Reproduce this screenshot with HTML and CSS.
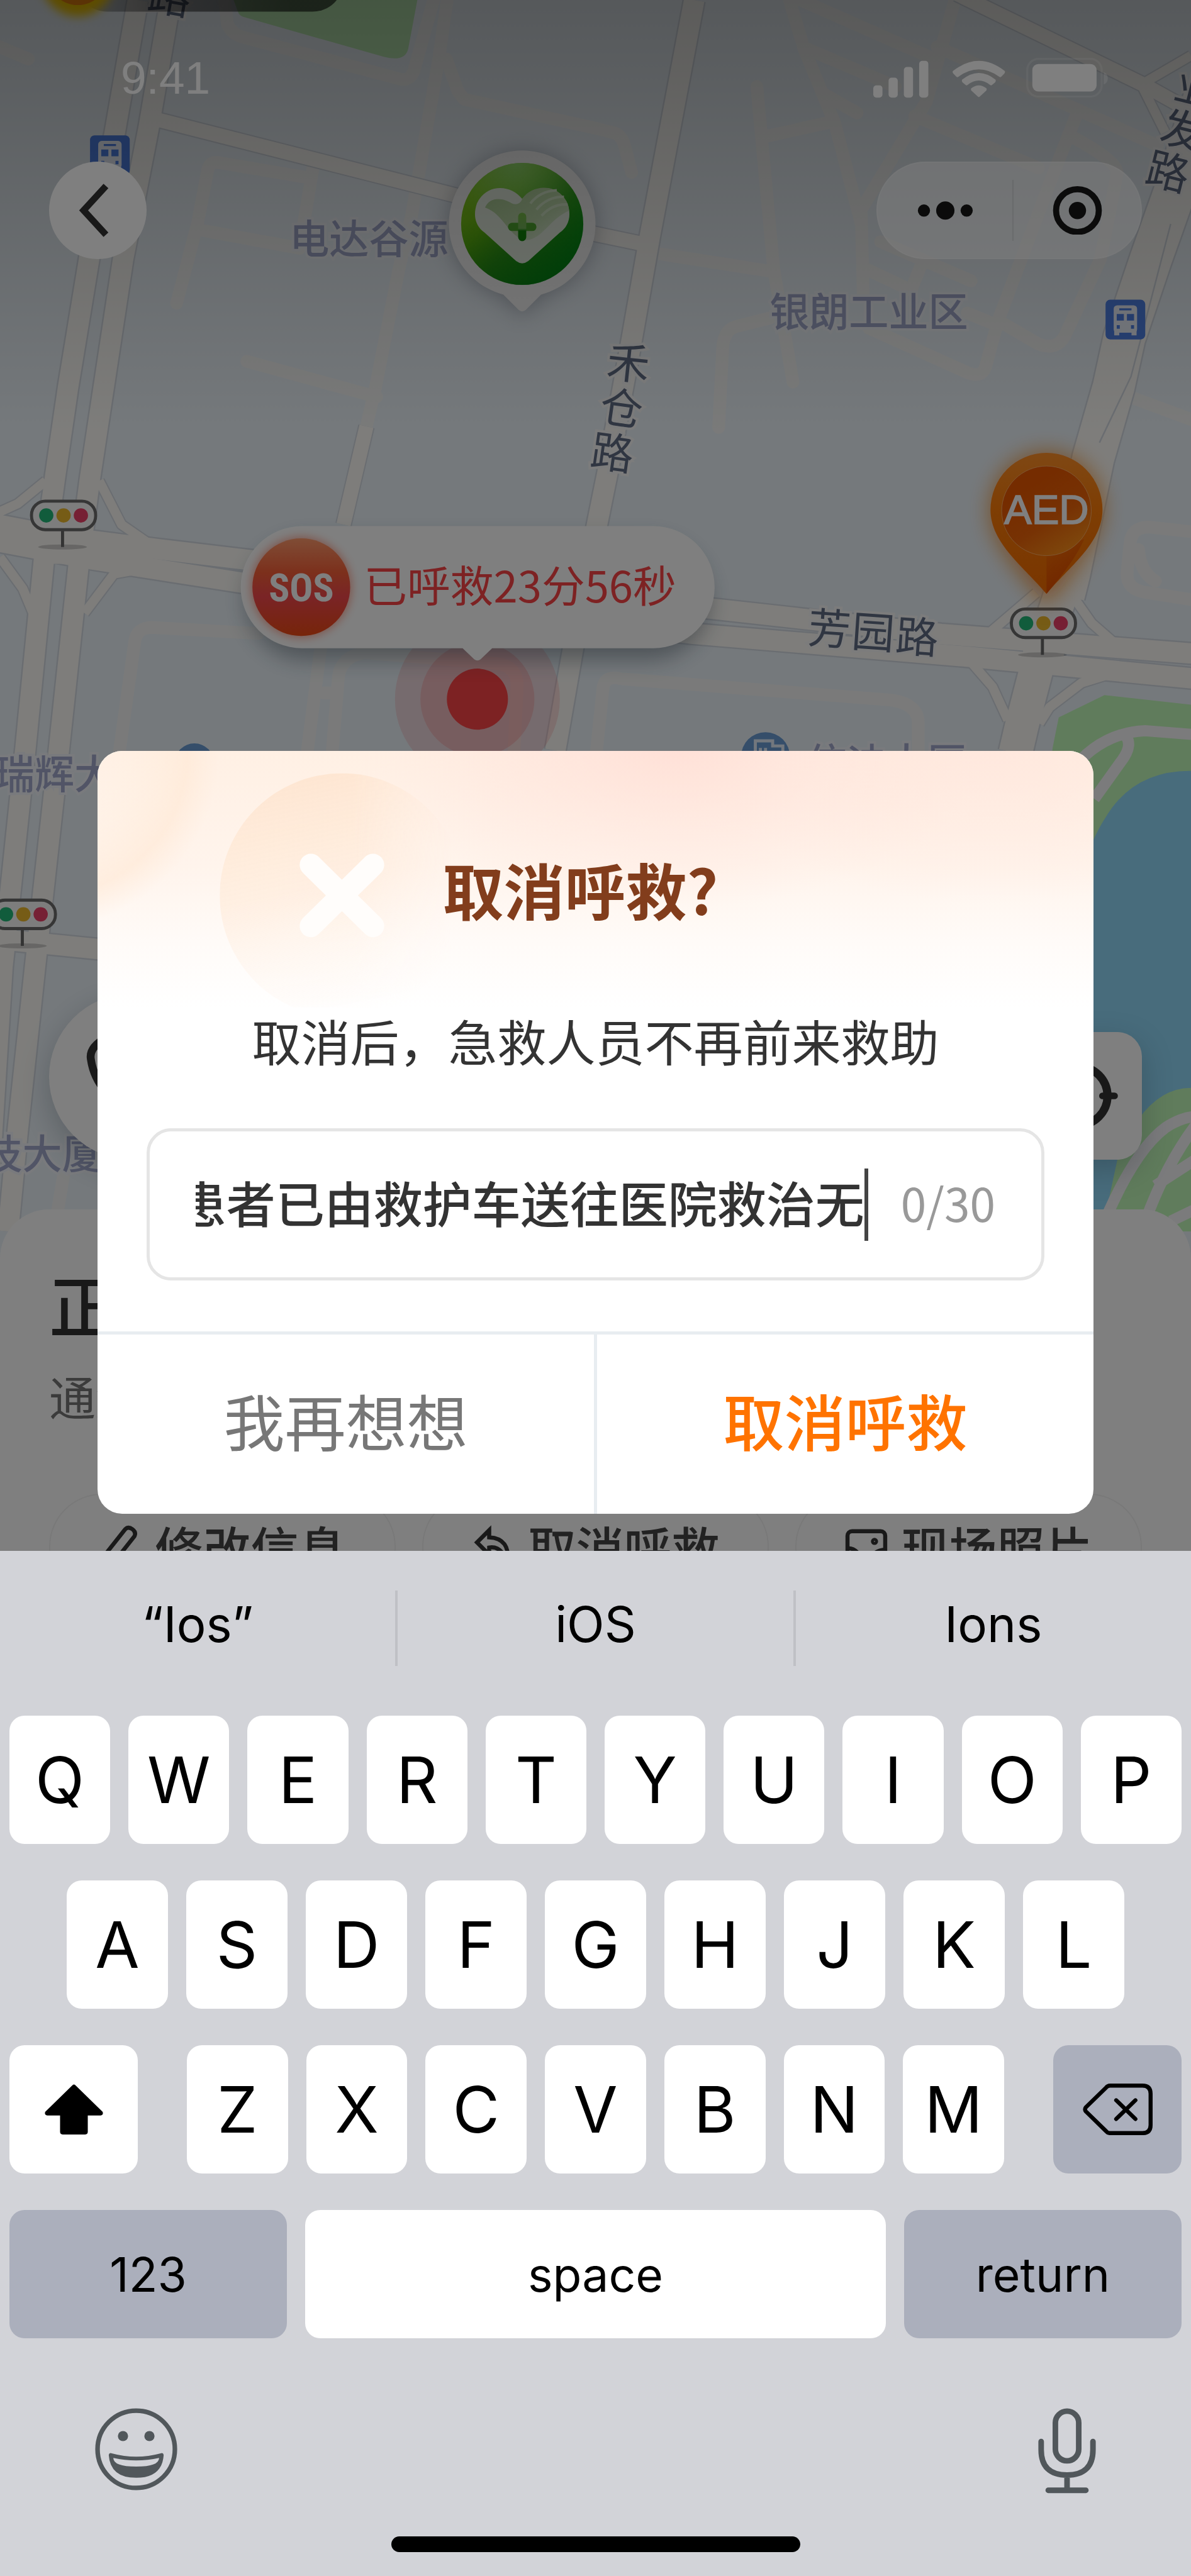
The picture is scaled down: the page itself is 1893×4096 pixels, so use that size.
FILE: index.html
```html
<!DOCTYPE html>
<html lang="zh-CN">
<head>
<meta charset="utf-8">
<meta name="viewport" content="width=device-width, initial-scale=1">
<title>取消呼救</title>
<link rel="stylesheet" href="styles.css">
</head>
<body>
<div class="phone">
  <main class="scene">
    <svg class="map" viewBox="0 0 2340 3048" preserveAspectRatio="xMidYMin slice" role="img" aria-label="地图">
      <defs>
        <g id="r-main" fill="none">
          <path d="M271 0L225 264L176 504L134 760L108 939L87 1094L50 1472L5 1900L-20 2300"/>
          <path d="M335 0L292 252L242 509L204 760L177 939L155 1106L116 1472L69 1900L34 2231L16 2420"/>
          <path d="M1364 0L1277 463L1240 674L1193 932L1173 1031L1126 1274L1091 1475"/>
          <path d="M-10 1030L120 1055L300 1078L485 1100L1405 1197L1849 1246L2350 1285"/>
          <path d="M-10 1063L180 1099L474 1145L1356 1245L1894 1290L2350 1334"/>
          <path d="M-10 1845L200 1866"/>
        </g>
        <g id="r-side" fill="none">
          <path d="M313 236L895 384L1170 460L1256 478"/>
          <path d="M1880 -12L2244 165L2350 224"/>
          <path d="M720 838L675 1031"/>
        </g>
        <g id="r-wide" fill="none">
          <path d="M2370 180L2311 368L2261 509L2209 664L2188 760L2148 900L2100 1130L2090 1170"/>
        </g>
        <g id="r-wide2" fill="none">
          <path d="M2090 1150L2038 1308L2008 1424L1995 1480"/>
        </g>
        <g id="r-slip" fill="none">
          <path d="M-5 1008L35 990L90 945M195 945L239 1031L298 1072M0 1095L45 1157L65 1205M166 1205L224 1128L280 1118"/>
          <path d="M2036 1165L1946 1242M2110 1175L2145 1225L2192 1266M1905 1298L1950 1350L1980 1415M2042 1422L2062 1390L2125 1342L2170 1328"/>
          <path d="M2244 165L2340 109M2244 170L2289 260"/>
        </g>
        <linearGradient id="shade" x2="0" y2="1">
          <stop offset="0" stop-color="#000" stop-opacity=".27"/>
          <stop offset="1" stop-color="#000" stop-opacity="0"/>
        </linearGradient>
        <linearGradient id="pill" x2="1">
          <stop offset="0" stop-color="#000" stop-opacity=".2"/>
          <stop offset=".35" stop-color="#000" stop-opacity=".45"/>
          <stop offset=".8" stop-color="#000" stop-opacity=".6"/>
        </linearGradient>
        <linearGradient id="green" x1=".15" y1=".2" x2=".85" y2=".8">
          <stop offset="0" stop-color="#7ec81a"/>
          <stop offset=".25" stop-color="#6cc012"/>
          <stop offset=".55" stop-color="#3ca41c"/>
          <stop offset="1" stop-color="#0a9a1c"/>
        </linearGradient>
        <radialGradient id="green-top" cx=".45" cy="0" r=".55">
          <stop offset="0" stop-color="#a6eca0" stop-opacity=".65"/>
          <stop offset="1" stop-color="#a6eca0" stop-opacity="0"/>
        </radialGradient>
        <linearGradient id="green-bottom" x1=".5" y1=".4" x2=".6" y2="1">
          <stop offset="0" stop-color="#007a00" stop-opacity="0"/>
          <stop offset="1" stop-color="#007a10" stop-opacity=".6"/>
        </linearGradient>
        <linearGradient id="palm" x1="0" y1="0" x2="1" y2="1">
          <stop offset="0" stop-color="#a8cc90"/>
          <stop offset=".6" stop-color="#c0dcae"/>
          <stop offset="1" stop-color="#e6f4e4"/>
        </linearGradient>
        <linearGradient id="cross" x2="0" y2="1">
          <stop offset="0" stop-color="#7ec84c"/>
          <stop offset=".55" stop-color="#7cc060"/>
          <stop offset=".64" stop-color="#108c08"/>
          <stop offset="1" stop-color="#108c08"/>
        </linearGradient>
        <linearGradient id="sos" x2="0" y2="1">
          <stop offset="0" stop-color="#ff9a6c"/>
          <stop offset=".35" stop-color="#f86038"/>
          <stop offset=".6" stop-color="#f4484c"/>
          <stop offset="1" stop-color="#ee4a14"/>
        </linearGradient>
        <linearGradient id="aed" x2="0" y2="1">
          <stop offset="0" stop-color="#ff9028"/>
          <stop offset=".4" stop-color="#fc7c08"/>
          <stop offset="1" stop-color="#f46c00"/>
        </linearGradient>
        <linearGradient id="aed-in" x1=".3" y1=".2" x2=".8" y2="1">
          <stop offset="0" stop-color="#ea5800"/>
          <stop offset=".5" stop-color="#ee6408"/>
          <stop offset="1" stop-color="#ff961c"/>
        </linearGradient>
        <linearGradient id="aed-side" x2=".5" y2="1">
          <stop offset="0" stop-color="#e04800" stop-opacity="0"/>
          <stop offset="1" stop-color="#e04800"/>
        </linearGradient>
        <filter id="soft" x="-50%" y="-50%" width="200%" height="200%"><feGaussianBlur stdDeviation="22"/></filter>
        <filter id="soft-s" x="-50%" y="-50%" width="200%" height="200%"><feGaussianBlur stdDeviation="9"/></filter>
        <g id="bus">
          <rect width="78" height="78" rx="9" fill="#4f82e8"/>
          <rect x="16" y="11" width="46" height="54" rx="7" fill="#eef4ff"/>
          <path d="M17 60h10v10H17zM51 60h10v10H51z" fill="#eef4ff"/>
          <path d="M27 17h24v4H27zM22 28h14v13H22zM42 28h14v13H42zM22 50h6v7h-6zM50 50h6v7h-6z" fill="#4f82e8"/>
        </g>
        <g id="signal">
          <ellipse cx="-2" cy="62" rx="48" ry="5" fill="#000" opacity=".18"/>
          <path d="M-2 28V62" stroke="#666" stroke-width="6"/>
          <rect x="-63" y="-28" width="126" height="56" rx="27" fill="#fafafa" stroke="#6c6c6c" stroke-width="6"/>
          <circle cx="-34" r="14" fill="#22b878"/><circle r="14" fill="#ecb82c"/><circle cx="34" r="14" fill="#ec4068"/>
        </g>
      </defs>

      <rect width="2340" height="3048" fill="#ebf3f9"/>
      <path d="M459 0L468 24Q470 30 478 33L755 112Q796 122 802 96L820 0Z" fill="#bcecb4"/>
      <path d="M2055 1600L2068 1470L2080 1410L2170 1366L2340 1385V2420H2055Z" fill="#c0f8b8"/>
      <path d="M2100 2420V1760Q2150 1640 2170 1610Q2225 1514 2340 1515V2138Q2250 2138 2195 2280L2165 2420Z" fill="#90d8f8"/>

      <g class="lane">
        <path d="M440 -10L447 48Q455 66 477 73L785 155Q805 160 813 140L852 0"/>
        <path d="M880 -10L862 116L820 359L809 422L783 533L738 760L720 838"/>
        <path d="M630 1274L604 1475M877 116L900 180L912 195L1170 252L1210 262Q1224 270 1228 290L1241 339"/>
        <path d="M-10 88L56 116M347 596L388 440L408 335Q412 315 432 320L604 349M615 330L590 480M388 451L589 488M485 710L740 780"/>
        <path d="M235 1475L265 1260Q269 1234 298 1233L507 1245M653 1475L665 1330Q670 1290 716 1283L977 1304Q1018 1310 1016 1350L1010 1475"/>
        <path d="M636 1362H660M1573 0L1826 112M1588 97L1759 170M1876 0L1820 200L1692 412L1696 582M1548 -10L1580 97L1640 242L1692 440"/>
        <path d="M1487 170L1520 528L1558 751M1509 267L1632 240M1617 184L1684 222M1841 92L2274 286M1797 228L2040 330"/>
        <path d="M2114 228L2070 340L1961 630L1936 722Q1928 744 1900 732L1707 645M1961 630L2040 676Q2076 690 2092 660L2162 509L2195 340Q2194 316 2110 271"/>
        <path d="M1730 475L1908 552M1700 528L1789 570M1810 520L1790 570M1297 499L1513 533M1513 625L1445 642Q1424 648 1420 680L1412 840"/>
        <path d="M1900 615L1961 640M1172 1475L1185 1350Q1190 1326 1220 1334L1752 1376Q1804 1384 1804 1420V1475"/>
        <path d="M2350 1046L2260 1036Q2222 1034 2220 1070L2214 1128Q2214 1158 2250 1164L2350 1180M2237 1080Q2240 1125 2270 1142M2220 780L2350 828M125 2310L110 2400"/>
      </g>
      <g class="park-path">
        <path d="M2100 1520Q2160 1440 2250 1436L2350 1444M2205 1440Q2232 1460 2200 1500L2150 1570"/>
        <path d="M2170 2400Q2230 2260 2290 2216Q2320 2196 2350 2194M2250 2400Q2290 2290 2350 2210M2270 2330L2350 2278M2300 2400L2350 2376"/>
      </g>

      <g class="casing">
        <use href="#r-slip" stroke-width="23"/><use href="#r-side" stroke-width="33"/><use href="#r-main" stroke-width="46"/><use href="#r-wide" stroke-width="88"/><use href="#r-wide2" stroke-width="72"/>
      </g>
      <g class="road">
        <use href="#r-slip" stroke-width="18"/><use href="#r-side" stroke-width="28"/><use href="#r-main" stroke-width="40"/><use href="#r-wide" stroke-width="82"/><use href="#r-wide2" stroke-width="66"/>
        <path d="M80 1078H180" stroke-width="60"/>
        <path d="M2010 1276H2090" stroke-width="60"/>
      </g>
      <path d="M2300 440L2222 740L2160 870" fill="none" stroke="#d4dae2" stroke-width="3"/>

      <g class="place">
        <text x="569" y="498">电达谷源</text>
        <text x="1512" y="642">银朗工业区</text>
        <text x="-10" y="1550">瑞辉大</text>
        <text x="-34" y="2297">技大厦</text>
        <text x="1586" y="1528">信迪大厦</text>
      </g>
      <g class="street">
        <text transform="translate(335 -12) rotate(10)">路</text>
        <text transform="translate(1235 708) rotate(6)">禾</text>
        <text transform="translate(1222 797) rotate(8)">仓</text>
        <text transform="translate(1204 884) rotate(8)">路</text>
        <text transform="translate(1630 1230) rotate(4)">芳</text>
        <text transform="translate(1716 1237) rotate(4)">园</text>
        <text transform="translate(1802 1246) rotate(4)">路</text>
        <text transform="translate(2352 168) rotate(14)">业</text>
        <text transform="translate(2325 250) rotate(14)">发</text>
        <text transform="translate(2296 332) rotate(14)">路</text>
      </g>
      <use href="#bus" x="177" y="266"/>
      <use href="#bus" x="2172" y="589"/>
      <circle cx="382" cy="1500" r="39" fill="#6a9cd4"/>
      <circle cx="1504" cy="1487" r="48" fill="#6a9cd4"/>
      <path d="M1484 1500V1456H1518V1466H1538V1500M1494 1470V1500M1504 1470V1500" fill="none" stroke="#e4eefa" stroke-width="6"/>
      <use href="#signal" x="125" y="1013"/>
      <use href="#signal" x="2050" y="1225"/>
      <use href="#signal" x="46" y="1797"/>

      <rect x="150" y="-100" width="525" height="123" rx="61" fill="url(#pill)"/>
      <circle cx="153" cy="-40" r="72" fill="#ffd000" filter="url(#soft-s)"/>
      <circle cx="153" cy="-50" r="60" fill="#f88c10"/>

      <!-- volunteer pin -->
      <path d="M1026 620L985 580A144 144 0 1 1 1067 580Z" fill="#303848" opacity=".35" filter="url(#soft)"/>
      <path d="M1019 609L989 579A144 144 0 1 1 1063 579L1033 609Q1026 615 1019 609Z" fill="#f8f8f8"/>
      <circle cx="1026" cy="440" r="120" fill="url(#green)"/>
      <circle cx="1026" cy="440" r="120" fill="url(#green-top)"/>
      <circle cx="1026" cy="440" r="120" fill="url(#green-bottom)"/>
      <path d="M1026 391C1004 362 955 360 937 400C928 426 936 446 952 457L1014 513Q1026 522 1038 513L1100 457C1116 446 1124 426 1115 400C1097 360 1048 362 1026 391Z" fill="#e6f0e2"/>
      <path d="M953 408C962 386 988 388 1006 400C1022 406 1026 391 1026 391C1042 366 1080 362 1100 380Q1117 394 1118 414C1080 430 1066 470 1034 472C1000 468 990 420 953 408Z" fill="url(#palm)"/>
      <path d="M1042 400Q1060 376 1094 374M1054 412Q1076 386 1108 387M1064 424Q1086 400 1115 402" fill="none" stroke="#d6eaca" stroke-width="5"/>
      <rect x="998" y="438" width="56" height="16" rx="8" fill="#50ac30"/>
      <rect x="1018" y="418" width="16" height="56" rx="8" fill="url(#cross)"/>

      <!-- AED pin -->
      <path d="M2056 1190C2000 1120 1940 1060 1946 1000A110 112 0 0 1 2166 1000C2166 1060 2110 1120 2056 1190Z" fill="#f47c10" opacity=".7" filter="url(#soft)"/>
      <path d="M2056 1167C2014 1116 1946 1068 1946 1002A110 112 0 0 1 2166 1002C2166 1068 2098 1116 2056 1167Z" fill="url(#aed)"/>
      <path d="M2056 1167V1080L2130 1060Q2110 1105 2056 1167Z" fill="url(#aed-side)"/>
      <circle cx="2056" cy="1004" r="88" fill="url(#aed-in)" stroke="#ffb878" stroke-width="1"/>
      <text class="aed-text" x="2056" y="1029">AED</text>
      <rect width="2340" height="848" fill="url(#shade)"/>

      <!-- caller pin -->
      <circle cx="938" cy="1374" r="162" fill="#fa4446" opacity=".16"/>
      <circle cx="938" cy="1374" r="112" fill="#fa4446" opacity=".2"/>
      <circle cx="938" cy="1374" r="60" fill="#fa4446"/>
      <rect x="483" y="1060" width="911" height="236" rx="118" fill="#203040" opacity=".4" filter="url(#soft)"/>
      <path d="M593 1034H1284A120 120 0 0 1 1284 1274H967L944 1296Q938 1300 932 1296L909 1274H593A120 120 0 0 1 593 1034Z" fill="#fff"/>
      <circle cx="592" cy="1154" r="98" fill="#fa6040" opacity=".6" filter="url(#soft-s)"/>
      <circle cx="592" cy="1154" r="96" fill="url(#sos)"/>
      <text class="sos-text" x="592" y="1182">SOS</text>
      <text class="sos-time" x="715" y="1184">已呼救23分56秒</text>
    </svg>

    <div class="ui">
      <div class="status">
        <span class="status__time">9:41</span>
        <svg class="status__icons" viewBox="0 0 464 78" aria-hidden="true">
          <g fill="#fff">
            <rect x="0" y="54" width="18" height="24" rx="6"/><rect x="30" y="39" width="18" height="39" rx="6"/><rect x="60" y="18" width="18" height="60" rx="6"/><rect x="90" y="6" width="18" height="72" rx="6"/>
            <path d="M156 26Q207-14 258 26Q259 29 257 31L251 37Q249 39 247 37Q207 8 167 37Q165 39 163 37L157 31Q155 29 156 26Z"/>
            <path d="M174 43Q207 16 240 43Q241 46 239 48L233 53Q231 55 229 53Q207 36 185 53Q183 55 181 53L175 48Q173 46 174 43Z"/>
            <path d="M192 60Q207 48 222 60Q223 62 222 64L209 76Q207 78 205 76L192 64Q191 62 192 60Z"/>
            <rect x="312" y="12" width="126" height="54" rx="12"/>
            <path d="M452 28Q460 31 460 40T452 52Z" opacity=".35"/>
          </g>
          <rect x="302" y="2" width="146" height="74" rx="22" fill="none" stroke="#fff" stroke-width="4" opacity=".2"/>
        </svg>
      </div>
      <div class="nav">
        <button class="nav__back" type="button" aria-label="返回">
          <svg viewBox="0 0 192 192" aria-hidden="true"><path d="M112 48L68 96L112 144" fill="none" stroke="#333" stroke-width="13"/></svg>
        </button>
        <div class="capsule">
          <button class="capsule__more" type="button" aria-label="更多"><svg viewBox="0 0 120 96" aria-hidden="true"><circle cx="18" cy="48" r="12"/><circle cx="60" cy="48" r="18"/><circle cx="102" cy="48" r="12"/></svg></button>
          <button class="capsule__close" type="button" aria-label="关闭"><svg viewBox="0 0 120 96" aria-hidden="true"><circle cx="60" cy="48" r="42" fill="none" stroke="#161616" stroke-width="12"/><circle cx="60" cy="48" r="17"/></svg></button>
        </div>
      </div>
      <div class="tools">
        <button class="tools__phone" type="button" aria-label="电话">
          <svg viewBox="0 0 96 96" aria-hidden="true"><path d="M22 8Q4 18 6 30Q12 72 66 90Q78 92 88 74Q90 70 86 66L68 56Q64 54 60 58L54 64Q38 54 32 42L38 36Q42 32 40 28L30 10Q27 6 22 8Z" fill="none" stroke="#333" stroke-width="8"/></svg>
        </button>
        <button class="tools__locate" type="button" aria-label="定位">
          <svg viewBox="0 0 160 160" aria-hidden="true"><g fill="none" stroke="#333" stroke-width="16" stroke-linecap="round"><circle cx="80" cy="80" r="58"/><path d="M80 8V32M80 128V152M8 80H32M128 80H152" stroke-width="13"/></g></svg>
        </button>
      </div>
      <section class="sheet">
        <h2>正在</h2>
        <p>通知中</p>
        <div class="sheet__actions">
          <button type="button"><svg viewBox="0 0 84 84" aria-hidden="true"><path d="M14 56L52 8Q58 2 66 8T70 22L32 70L10 76Z"/></svg>修改信息</button>
          <button type="button"><svg viewBox="0 0 84 84" aria-hidden="true"><path d="M34 10L10 34L34 58V44Q58 40 70 74Q76 26 34 24Z"/></svg>取消呼救</button>
          <button type="button"><svg viewBox="0 0 84 84" aria-hidden="true"><rect x="5" y="12" width="74" height="62" rx="9"/><path d="M6 46Q20 44 34 66M48 70Q56 50 78 48"/><circle cx="58" cy="32" r="3"/></svg>现场照片</button>
        </div>
      </section>
    </div>

    <div class="mask"></div>

    <div class="stage">
      <form class="dialog" role="dialog" aria-labelledby="dialog-title">
        <svg class="dialog__art" viewBox="0 0 1956 504" aria-hidden="true">
          <defs>
            <linearGradient id="base" x2="0" y2="1">
              <stop offset="0" stop-color="#fff0e4"/><stop offset=".45" stop-color="#fff4ec"/><stop offset=".75" stop-color="#fffbf8"/><stop offset="1" stop-color="#fff"/>
            </linearGradient>
            <radialGradient id="pink" gradientUnits="userSpaceOnUse" cx="0" cy="0" r="1" gradientTransform="translate(1130 -20) scale(620 330)">
              <stop offset="0" stop-color="#ffdfd6" stop-opacity=".95"/><stop offset="1" stop-color="#ffe4dc" stop-opacity="0"/>
            </radialGradient>
            <radialGradient id="pink2" gradientUnits="userSpaceOnUse" cx="0" cy="0" r="1" gradientTransform="translate(1760 0) scale(560 300)">
              <stop offset="0" stop-color="#ffe6dc" stop-opacity=".8"/><stop offset="1" stop-color="#ffe6dc" stop-opacity="0"/>
            </radialGradient>
            <radialGradient id="arc" gradientUnits="userSpaceOnUse" cx="-110" cy="0" r="350">
              <stop offset=".3" stop-color="#fff4e6" stop-opacity="0"/><stop offset=".82" stop-color="#ffe8d4" stop-opacity=".6"/><stop offset="1" stop-color="#ffead8" stop-opacity="0"/>
            </radialGradient>
            <linearGradient id="disc" x1=".4" x2=".6" y2="1">
              <stop offset="0" stop-color="#fee6d2"/><stop offset=".45" stop-color="#ffeee0" stop-opacity=".9"/><stop offset=".9" stop-color="#fffaf6" stop-opacity=".4"/><stop offset="1" stop-color="#fff" stop-opacity="0"/>
            </linearGradient>
            <linearGradient id="disc-fade" x2="1"><stop offset=".55" stop-color="#fff"/><stop offset=".95" stop-color="#000"/></linearGradient>
            <mask id="disc-mask"><rect x="240" y="44" width="480" height="460" fill="url(#disc-fade)"/></mask>
          </defs>
          <rect width="1956" height="504" fill="url(#base)"/>
          <rect width="1956" height="504" fill="url(#pink)"/>
          <rect width="1956" height="504" fill="url(#pink2)"/>
          <rect width="400" height="400" fill="url(#arc)"/>
          <circle cx="480" cy="284" r="240" fill="url(#disc)" mask="url(#disc-mask)"/>
          <path d="M419 224L541 344M541 224L419 344" stroke="#fffdfb" stroke-width="44" stroke-linecap="round"/>
        </svg>
        <div class="dialog__body">
          <h1 id="dialog-title">取消呼救?</h1>
          <p>取消后，急救人员不再前来救助</p>
          <div class="field">
            <input type="text" value="患者已由救护车送往医院救治无" aria-label="取消原因">
            <span class="field__caret"></span>
            <span class="field__count">0/30</span>
          </div>
        </div>
        <div class="dialog__actions">
          <button type="button">我再想想</button>
          <button class="is-primary" type="submit">取消呼救</button>
        </div>
      </form>
    </div>
  </main>

  <section class="keyboard" aria-label="键盘">
    <div class="suggest">
      <button type="button">“Ios”</button><button type="button">iOS</button><button type="button">Ions</button>
    </div>
    <div class="rows">
      <div class="row"><button>Q</button><button>W</button><button>E</button><button>R</button><button>T</button><button>Y</button><button>U</button><button>I</button><button>O</button><button>P</button></div>
      <div class="row row--inset"><button>A</button><button>S</button><button>D</button><button>F</button><button>G</button><button>H</button><button>J</button><button>K</button><button>L</button></div>
      <div class="row row--wide">
        <button class="key-side" aria-label="shift"><svg viewBox="0 0 114 98" aria-hidden="true"><path d="M54 2Q57-1 60 2L113 54Q115 60 109 61H84V93Q84 98 79 98H35Q30 98 30 93V61H5Q-1 60 1 54Z"/></svg></button>
        <div class="row__letters"><button>Z</button><button>X</button><button>C</button><button>V</button><button>B</button><button>N</button><button>M</button></div>
        <button class="key-side is-grey" aria-label="delete"><svg viewBox="0 0 138 102" aria-hidden="true"><g fill="none" stroke="#000" stroke-width="8" stroke-linejoin="round" stroke-linecap="round"><path d="M54 4H118Q134 4 134 20V82Q134 98 118 98H54Q49 98 46 94L6 55Q3 51 6 47L46 8Q49 4 54 4Z"/><path d="M66 33L104 70M104 33L66 70"/></g></svg></button>
      </div>
      <div class="row row--text"><button class="key-fn is-grey">123</button><button>space</button><button class="key-fn is-grey">return</button></div>
    </div>
    <div class="tray">
      <button type="button" aria-label="表情"><svg class="tray__emoji" viewBox="0 0 162 162" aria-hidden="true"><circle cx="81" cy="81" r="76" fill="none" stroke="#51575b" stroke-width="9"/><ellipse cx="55" cy="55" rx="10" ry="10" fill="#51575b"/><ellipse cx="107" cy="55" rx="10" ry="10" fill="#51575b"/><path d="M27 92Q28 87 33 89Q81 102 129 89Q134 87 135 92Q132 137 81 137T27 92Z" fill="#51575b"/><path d="M36 98Q81 108 126 98Q126 115 81 115T36 98Z" fill="#d2d3d8"/></svg></button>
      <button type="button" aria-label="语音"><svg class="tray__mic" viewBox="0 0 114 168" aria-hidden="true"><g fill="none" stroke="#51575b" stroke-width="11" stroke-linecap="round"><rect x="34" y="6" width="46" height="98" rx="23"/><path d="M6 66V82Q6 132 57 132T108 82V66M57 132V158M20 162H94"/></g></svg></button>
    </div>
    <div class="home"></div>
  </section>
</div>
</body>
</html>
```
FILE: styles.css
```css
* { box-sizing: border-box; }

body {
  margin: 0;
  background: #d2d3d8;
  font-family: "Noto Sans CJK SC", "Noto Sans", sans-serif;
}

h1, h2, p { margin: 0; }

button {
  padding: 0;
  border: 0;
  background: none;
  color: inherit;
  font: inherit;
}

svg { display: block; }

.phone {
  display: flex;
  flex-direction: column;
  min-height: 100vh;
}

/* Map scene with its layers */
.scene {
  position: relative;
  flex: 1;
  overflow: hidden;
}

.map, .ui, .mask {
  position: absolute;
  inset: 0;
  width: 100%;
  height: 100%;
}

.mask { background: rgba(0, 0, 0, .5); }

.lane path { fill: none; stroke: #f4f5f4; stroke-width: 25px; stroke-linecap: round; stroke-linejoin: round; }
.park-path path { fill: none; stroke: #f6f6f9; stroke-width: 22px; }
.casing { stroke: #d4dae2; stroke-linejoin: round; }
.road { stroke: #fcfbf7; stroke-linejoin: round; }

.place text {
  font-size: 78px;
  font-weight: 500;
  fill: #a2a9cc;
  stroke: #f2f5fa;
  stroke-width: 10px;
  paint-order: stroke;
}

.street text {
  font-size: 84px;
  font-weight: 400;
  text-anchor: middle;
  dominant-baseline: central;
  fill: #606c84;
  stroke: #f8f8f8;
  stroke-width: 10px;
  paint-order: stroke;
}

.aed-text {
  font: 500 81px "Liberation Sans", sans-serif;
  text-anchor: middle;
  fill: #fff;
  stroke: #fff;
  stroke-width: 2px;
}

.sos-text {
  font: 700 76px "Liberation Sans Narrow", "Roboto Condensed", "Liberation Sans", sans-serif;
  text-anchor: middle;
  fill: #fff;
}

.sos-time { font-size: 85px; fill: #fa4446; }

.ui {
  display: flex;
  flex-direction: column;
  padding-top: 92px;
}

.status {
  display: flex;
  justify-content: space-between;
  align-items: center;
  height: 64px;
  padding: 0 129px 0 192px;
}

.status__time {
  font: 400 73px/64px "Liberation Sans", sans-serif;
  color: #fff;
}

.status__icons { width: 376px; }

.nav {
  display: flex;
  justify-content: space-between;
  margin-top: 101px;
  padding: 0 78px;
}

.nav__back {
  width: 155px;
  height: 155px;
  border-radius: 50%;
  background: #fff;
}

.capsule {
  display: flex;
  align-items: center;
  width: 422px;
  height: 155px;
  border: 2px solid rgba(255, 255, 255, .2);
  border-radius: 78px;
  background: rgba(255, 255, 255, .5);
}

.capsule button {
  display: flex;
  justify-content: center;
  align-items: center;
  height: 97px;
}

.capsule__more { flex: 1; }
.capsule .capsule__close { width: 204px; border-left: 2px solid rgba(0, 0, 0, .08); }
.capsule svg { width: 97px; fill: #161616; }

.tools {
  display: flex;
  justify-content: space-between;
  align-items: flex-end;
  margin-top: 1168px;
  padding: 0 78px;
}

.tools button {
  display: flex;
  justify-content: center;
  align-items: center;
  background: #fff;
  box-shadow: 0 16px 48px rgba(32, 48, 64, .25);
}

.tools__phone { width: 264px; height: 264px; border-radius: 50%; }
.tools__phone svg { width: 150px; }
.tools__locate { width: 204px; height: 203px; border-radius: 39px; }
.tools__locate svg { width: 129px; }

.sheet {
  flex-shrink: 0;
  margin-top: 79px;
  padding: 74px 78px 0;
  border-radius: 78px 78px 0 0;
  background: #fff;
}

.sheet h2 {
  font-size: 107px;
  font-weight: 500;
  line-height: 150px;
  color: #333;
}

.sheet p {
  margin-top: 20px;
  font-size: 74px;
  line-height: 104px;
  color: #777;
}

.sheet__actions {
  display: flex;
  gap: 42px;
  margin-top: 104px;
}

.sheet__actions button {
  display: flex;
  justify-content: center;
  align-items: center;
  gap: 22px;
  flex: 1;
  height: 168px;
  border: 2px solid #f2f2f2;
  border-radius: 84px;
  font-size: 76px;
  font-weight: 500;
  color: #444;
}

.sheet__actions svg {
  width: 68px;
  fill: none;
  stroke: #333;
  stroke-width: 8px;
}

/* Dialog */
.stage {
  position: relative;
  padding: 1194px 155px 59px;
}

.dialog {
  position: relative;
  overflow: hidden;
  border-radius: 39px;
  background: #fff;
}

.dialog__art {
  position: absolute;
  top: 0;
  left: 0;
  width: 100%;
}

.dialog__body {
  position: relative;
  padding: 144px 78px 81px;
  text-align: center;
}

.dialog h1 {
  padding-right: 48px;
  font-size: 97px;
  font-weight: 700;
  line-height: 150px;
  color: #823d1c;
}

.dialog p {
  margin-top: 110px;
  font-size: 78px;
  line-height: 112px;
  color: #333;
}

.field {
  display: flex;
  align-items: center;
  height: 242px;
  margin-top: 84px;
  padding: 0 73px;
  border: 5px solid #e5e5e5;
  border-radius: 39px;
}

.field input {
  flex: 1;
  min-width: 0;
  height: 120px;
  padding: 0 0 8px;
  border: 0;
  outline: 0;
  background: none;
  direction: rtl;
  font: 500 78px/112px "Noto Sans CJK SC", sans-serif;
  color: #333;
}

.field__caret {
  width: 6px;
  height: 115px;
  margin-right: 52px;
  background: #444;
}

.field__count {
  padding-bottom: 8px;
  font-size: 73px;
  line-height: 112px;
  color: #999;
}

.dialog__actions {
  display: flex;
  border-top: 5px solid #e8edf1;
}

.dialog__actions button {
  flex: 1;
  height: 285px;
  padding-bottom: 16px;
  font-size: 97px;
  color: #777;
}

.dialog__actions .is-primary {
  border-left: 5px solid #e8edf1;
  font-weight: 500;
  color: #ff7300;
}

/* Keyboard */
.keyboard {
  background: #d2d3d8;
  font-family: Inter, "Liberation Sans", sans-serif;
  color: #000;
}

.suggest {
  display: flex;
  padding: 63px 0 79px;
}

.suggest button {
  flex: 1;
  height: 120px;
  padding-bottom: 14px;
  font-size: 78px;
}

.suggest button + button { border-left: 4px solid #bfc0c5; }

.rows {
  display: grid;
  gap: 58px;
  padding: 0 15px;
}

.row, .row__letters {
  display: flex;
  gap: 29px;
}

.row button {
  display: flex;
  justify-content: center;
  align-items: center;
  flex: 1;
  height: 204px;
  border-radius: 24px;
  background: #fff;
  font-size: 102px;
}

.row--inset { padding: 0 91px; }
.row--wide { gap: 78px; }
.row__letters { flex: 1; }
.row .key-side { flex: 0 0 204px; }
.row .key-fn { flex: 0 0 441px; }
.row .is-grey { background: #abafbc; }
.row--text button { font-size: 75px; }
.key-side svg { width: 93px; }
.key-side.is-grey svg { width: 111px; }

.tray {
  display: flex;
  justify-content: space-between;
  align-items: flex-start;
  height: 137px;
  margin-top: 111px;
  padding: 0 151px;
}

.tray__emoji { width: 131px; }
.tray__mic { width: 92px; }

.home {
  width: 650px;
  height: 25px;
  margin: 67px auto 39px;
  border-radius: 13px;
  background: #000;
}
```
